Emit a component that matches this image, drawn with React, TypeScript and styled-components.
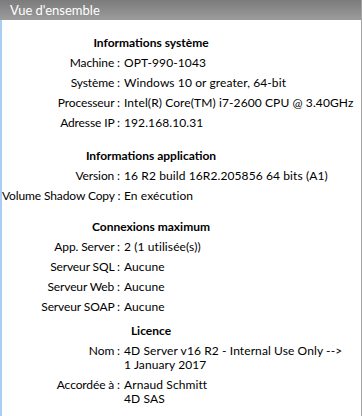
import React from 'react';
import styled, { createGlobalStyle } from 'styled-components';

const GlobalStyle = createGlobalStyle`
  html, body {
    margin: 0;
    padding: 0;
    background: #ffffff;
    overflow: hidden;
  }
`;

const Panel = styled.div`
  width: 362px;
  height: 416px;
  box-sizing: border-box;
  display: flex;
  flex-direction: column;
  border-right: 1px solid #a3a3a3;
  font-family: Lato, "Open Sans", sans-serif;
  font-size: 12px;
  color: #000;
  overflow: hidden;
`;

const TitleBar = styled.div`
  height: 20px;
  flex: none;
  display: flex;
  align-items: center;
  padding-left: 10px;
  background: linear-gradient(to bottom, #7b7b7b, #9c9c9c);
  color: #ffffff;
  font-size: 13px;
`;

const Body = styled.div`
  flex: 1;
  border-left: 2px solid #a9cdf3;
  padding-top: 13px;
`;

const Section = styled.section<{ $space: number }>`
  width: 298px;
  margin-top: ${p => p.$space}px;
  display: grid;
  grid-template-columns: 118px minmax(0, 1fr);
  column-gap: 4px;
`;

const Heading = styled.h3`
  grid-column: 1 / -1;
  margin: 0;
  height: 20px;
  line-height: 20px;
  text-align: center;
  font-size: 12px;
  font-weight: bold;
`;

const Label = styled.div<{ $multi?: boolean }>`
  text-align: right;
  white-space: nowrap;
  letter-spacing: -0.12px;
  line-height: ${p => (p.$multi ? '14px' : '20px')};
  padding: ${p => (p.$multi ? '3px 0' : '0')};
`;

const Value = styled.div<{ $multi?: boolean }>`
  white-space: nowrap;
  letter-spacing: 0.1px;
  line-height: ${p => (p.$multi ? '14px' : '20px')};
  padding: ${p => (p.$multi ? '3px 0' : '0')};
`;

type Row = { label: string; value: string[] };

const sections: { title: string; space: number; multi?: boolean; rows: Row[] }[] = [
  {
    title: 'Informations système',
    space: 0,
    rows: [
      { label: 'Machine', value: ['OPT-990-1043'] },
      { label: 'Système', value: ['Windows 10 or greater, 64-bit'] },
      { label: 'Processeur', value: ['Intel(R) Core(TM) i7-2600 CPU @ 3.40GHz'] },
      { label: 'Adresse IP', value: ['192.168.10.31'] },
    ],
  },
  {
    title: 'Informations application',
    space: 13,
    rows: [
      { label: 'Version', value: ['16 R2 build 16R2.205856 64 bits (A1)'] },
      { label: 'Volume Shadow Copy', value: ['En exécution'] },
    ],
  },
  {
    title: 'Connexions maximum',
    space: 11,
    rows: [
      { label: 'App. Server', value: ['2 (1 utilisée(s))'] },
      { label: 'Serveur SQL', value: ['Aucune'] },
      { label: 'Serveur Web', value: ['Aucune'] },
      { label: 'Serveur SOAP', value: ['Aucune'] },
    ],
  },
  {
    title: 'Licence',
    space: 4,
    multi: true,
    rows: [
      { label: 'Nom', value: ['4D Server v16 R2 - Internal Use Only -->', '1 January 2017'] },
      { label: 'Accordée à', value: ['Arnaud Schmitt', '4D SAS'] },
    ],
  },
];

export default function App() {
  return (
    <>
      <GlobalStyle />
      <Panel>
        <TitleBar>Vue d'ensemble</TitleBar>
        <Body>
          {sections.map(s => (
            <Section key={s.title} $space={s.space}>
              <Heading>{s.title}</Heading>
              {s.rows.map(r => (
                <React.Fragment key={r.label}>
                  <Label $multi={s.multi}>{r.label} :</Label>
                  <Value $multi={s.multi}>
                    {r.value.map(v => (
                      <div key={v}>{v}</div>
                    ))}
                  </Value>
                </React.Fragment>
              ))}
            </Section>
          ))}
        </Body>
      </Panel>
    </>
  );
}
